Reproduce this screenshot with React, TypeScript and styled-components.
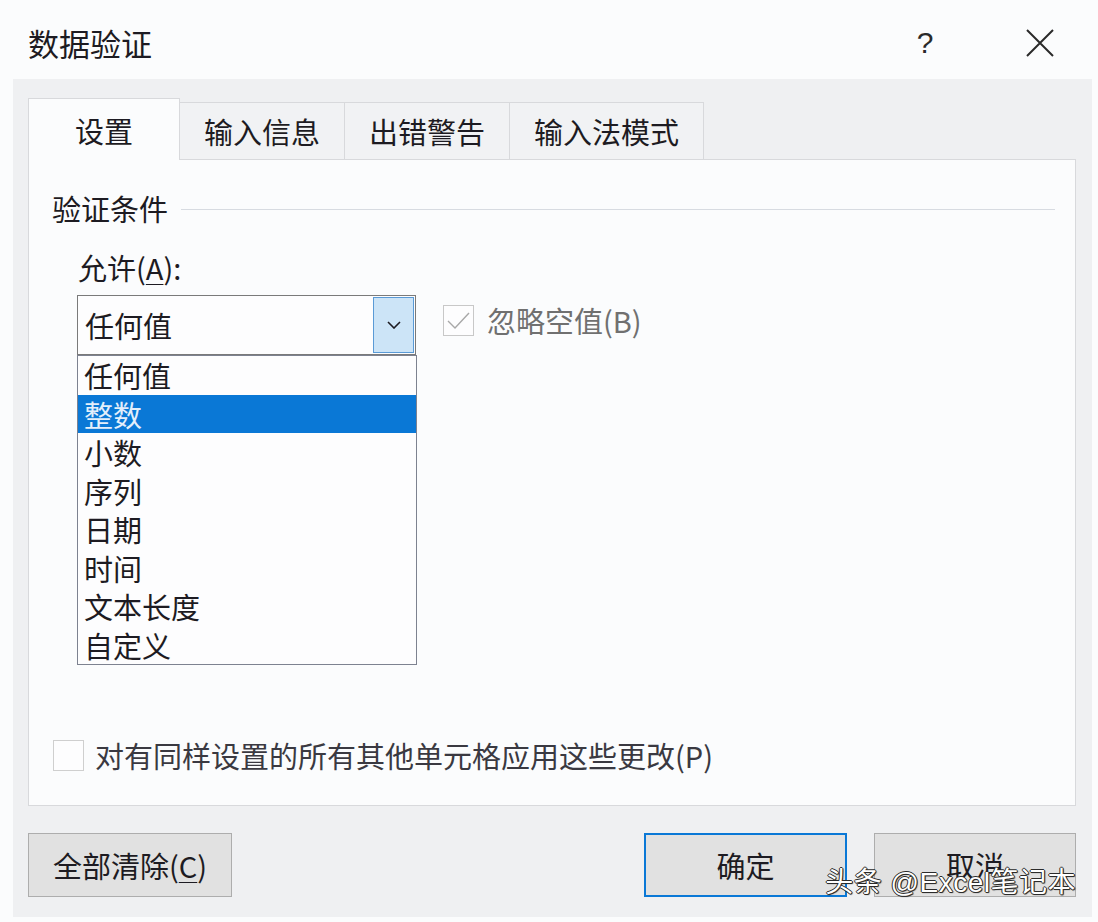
import React from "react";
import styled, { createGlobalStyle } from "styled-components";

const FONT = `"Microsoft YaHei", "Noto Sans CJK SC", "Noto Sans", sans-serif`;
const INK = "#1d1b22";

const GlobalStyle = createGlobalStyle`
  html, body {
    margin: 0;
    padding: 0;
    background: #fbfcfd;
  }
  body {
    font-family: ${FONT};
    color: ${INK};
  }
  #root {
    width: 1098px;
    height: 922px;
    overflow: hidden;
  }
`;

const Window = styled.div`
  position: relative;
  width: 1098px;
  height: 922px;
  display: flex;
  flex-direction: column;
  background: #fbfcfd;
`;

const TitleBar = styled.div`
  height: 79px;
  box-sizing: border-box;
  padding: 6px 38px 0 28px;
  display: flex;
  align-items: center;
`;

const Title = styled.div`
  flex: 1;
  font-size: 31px;
  line-height: 72px;
`;

const TitleButton = styled.div`
  width: 40px;
  height: 40px;
  display: flex;
  align-items: center;
  justify-content: center;
  font-family: "Liberation Sans", sans-serif;
  font-size: 30px;
  color: #2a2a2a;
  & + & {
    margin-left: 75px;
  }
`;

const Body = styled.div`
  flex: 1;
  margin: 0 6px 5px 13px;
  padding: 19px 16px 20px 15px;
  background: #eff0f2;
  display: flex;
  flex-direction: column;
`;

const TabStrip = styled.div`
  height: 62px;
  margin-bottom: -1px;
  display: flex;
  align-items: flex-end;
  position: relative;
  z-index: 1;
`;

const Tab = styled.div<{ $active?: boolean }>`
  box-sizing: border-box;
  height: ${(p) => (p.$active ? 62 : 58)}px;
  padding: 0 ${(p) => (p.$active ? 46 : 24)}px;
  border: 1px solid #d8d9dc;
  border-bottom: ${(p) => (p.$active ? "none" : "1px solid #d8d9dc")};
  background: ${(p) => (p.$active ? "#fbfcfd" : "#f1f2f4")};
  font-size: 29px;
  display: flex;
  align-items: center;
  & + & {
    margin-left: -1px;
  }
`;

const Panel = styled.div`
  flex: 1;
  box-sizing: border-box;
  border: 1px solid #d8d9dc;
  background: #fbfcfd;
  padding: 28px 20px 34px 23px;
  display: flex;
  flex-direction: column;
`;

const GroupHeader = styled.div`
  height: 40px;
  display: flex;
  align-items: center;
  font-size: 29px;
`;

const Rule = styled.div`
  flex: 1;
  height: 1px;
  margin: 2px 0 0 13px;
  background: #d7dbe1;
`;

const FieldLabel = styled.div`
  margin: 19px 0 0 26px;
  height: 40px;
  line-height: 40px;
  font-size: 29px;
`;

const Mnemonic = styled.span`
  text-decoration: underline;
  text-underline-offset: 4px;
  text-decoration-thickness: 1px;
`;

const ComboRow = styled.div`
  margin: 8px 0 0 25px;
  display: flex;
  align-items: flex-start;
`;

const ComboWrap = styled.div`
  position: relative;
`;

const Combo = styled.div`
  box-sizing: border-box;
  width: 339px;
  height: 60px;
  border: 1px solid #7a7a7a;
  background: #fdfdfe;
  display: flex;
  align-items: center;
  padding-left: 7px;
  font-size: 29px;
`;

const ComboText = styled.span`
  flex: 1;
`;

const DropButton = styled.div`
  box-sizing: border-box;
  width: 41px;
  height: 56px;
  margin-right: 1px;
  border: 1px solid #5a9ad6;
  background: #cce4f7;
  display: flex;
  align-items: center;
  justify-content: center;
`;

const DropList = styled.div`
  position: absolute;
  top: 60px;
  left: 0;
  box-sizing: border-box;
  width: 340px;
  border: 1px solid #7d8290;
  background: #fdfdfe;
  z-index: 2;
`;

const DropItem = styled.div<{ $selected?: boolean }>`
  height: 38.5px;
  line-height: 38.5px;
  padding-left: 6px;
  font-size: 29px;
  background: ${(p) => (p.$selected ? "#0a78d6" : "transparent")};
  color: ${(p) => (p.$selected ? "#e4effb" : INK)};
`;

const CheckRow = styled.label<{ $disabled?: boolean }>`
  display: flex;
  align-items: center;
  height: 31px;
  line-height: 31px;
  gap: ${(p) => (p.$disabled ? 13 : 11)}px;
  font-size: 29px;
  color: ${(p) => (p.$disabled ? "#707070" : "#3a3941")};
`;

const IgnoreBlank = styled(CheckRow)`
  margin: 10px 0 0 27px;
`;

const ApplyAll = styled(CheckRow)`
  margin: auto 0 0 1px;
`;

const CheckBox = styled.span<{ $disabled?: boolean }>`
  box-sizing: border-box;
  width: 31px;
  height: 31px;
  border: 1px solid ${(p) => (p.$disabled ? "#c8c8c8" : "#cfcfcf")};
  background: #fdfdfe;
  display: flex;
  align-items: center;
  justify-content: center;
`;

const ButtonRow = styled.div`
  margin-top: 27px;
  height: 64px;
  display: flex;
  gap: 27px;
`;

const Button = styled.div<{ $primary?: boolean; $width: number }>`
  box-sizing: border-box;
  width: ${(p) => p.$width}px;
  height: 64px;
  background: #e1e1e1;
  border: ${(p) => (p.$primary ? "2px solid #0a78d6" : "1px solid #adadad")};
  display: flex;
  align-items: center;
  justify-content: center;
  font-size: 29px;
  color: ${INK};
`;

const Spacer = styled.div`
  flex: 1;
  margin-left: -27px;
`;

const Watermark = styled.div`
  position: absolute;
  right: 22px;
  bottom: 22px;
  font-family: "Liberation Sans", "Noto Sans CJK SC", sans-serif;
  font-size: 28px;
  line-height: 34px;
  color: #ffffff;
  letter-spacing: 0.5px;
  text-shadow: 1px 0 0 #2b2b2b, -1px 0 0 #2b2b2b, 0 1px 0 #2b2b2b,
    0 -1px 0 #2b2b2b, 1px 1px 1px #2b2b2b;
  pointer-events: none;
  z-index: 5;
`;

const CloseIcon = () => (
  <svg width="28" height="28" viewBox="0 0 28 28">
    <path d="M1 1 L27 27 M27 1 L1 27" stroke="#2a2a2a" strokeWidth="2" fill="none" />
  </svg>
);

const Chevron = () => (
  <svg width="14" height="8" viewBox="0 0 14 8">
    <path d="M1 1 L7 7 L13 1" stroke="#1d1b22" strokeWidth="1.6" fill="none" />
  </svg>
);

const Tick = () => (
  <svg width="23" height="18" viewBox="0 0 23 18">
    <path d="M1 9 L8 16 L22 1" stroke="#a8a8a8" strokeWidth="1.4" fill="none" />
  </svg>
);

const TABS = ["设置", "输入信息", "出错警告", "输入法模式"];
const OPTIONS = ["任何值", "整数", "小数", "序列", "日期", "时间", "文本长度", "自定义"];

export default function App() {
  return (
    <>
      <GlobalStyle />
      <Window>
        <TitleBar>
          <Title>数据验证</Title>
          <TitleButton>?</TitleButton>
          <TitleButton>
            <CloseIcon />
          </TitleButton>
        </TitleBar>
        <Body>
          <TabStrip>
            {TABS.map((t, i) => (
              <Tab key={t} $active={i === 0}>
                {t}
              </Tab>
            ))}
          </TabStrip>
          <Panel>
            <GroupHeader>
              验证条件
              <Rule />
            </GroupHeader>
            <FieldLabel>
              允许(<Mnemonic>A</Mnemonic>):
            </FieldLabel>
            <ComboRow>
              <ComboWrap>
                <Combo>
                  <ComboText>任何值</ComboText>
                  <DropButton>
                    <Chevron />
                  </DropButton>
                </Combo>
                <DropList>
                  {OPTIONS.map((o) => (
                    <DropItem key={o} $selected={o === "整数"}>
                      {o}
                    </DropItem>
                  ))}
                </DropList>
              </ComboWrap>
              <IgnoreBlank $disabled>
                <CheckBox $disabled>
                  <Tick />
                </CheckBox>
                忽略空值(B)
              </IgnoreBlank>
            </ComboRow>
            <ApplyAll>
              <CheckBox />
              对有同样设置的所有其他单元格应用这些更改(P)
            </ApplyAll>
          </Panel>
          <ButtonRow>
            <Button $width={204}>
              全部清除(<Mnemonic>C</Mnemonic>)
            </Button>
            <Spacer />
            <Button $primary $width={203}>
              确定
            </Button>
            <Button $width={202}>取消</Button>
          </ButtonRow>
        </Body>
        <Watermark>头条 @Excel笔记本</Watermark>
      </Window>
    </>
  );
}
